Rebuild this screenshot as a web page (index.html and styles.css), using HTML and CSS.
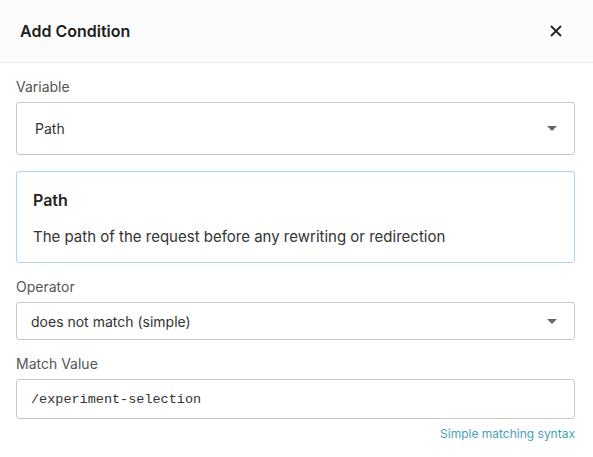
FILE: index.html
```html
<!DOCTYPE html>
<html>
<head>
<meta charset="utf-8">
<link rel="stylesheet" href="styles.css">
</head>
<body>
<div class="dialog">
  <div class="header">
    <div class="title">Add Condition</div>
    <svg class="close" width="12" height="12" viewBox="0 0 12 12"><path d="M1 1L11 11M11 1L1 11" stroke="#222" stroke-width="1.8" fill="none"/></svg>
  </div>
  <div class="content">
    <div class="label">Variable</div>
    <div class="select select-lg">
      <span>Path</span>
      <span class="caret"></span>
    </div>
    <div class="card">
      <div class="card-title">Path</div>
      <div class="card-desc">The path of the request before any rewriting or redirection</div>
    </div>
    <div class="label">Operator</div>
    <div class="select select-sm">
      <span>does not match (simple)</span>
      <span class="caret"></span>
    </div>
    <div class="label">Match Value</div>
    <div class="input">/experiment-selection</div>
    <div class="hint"><span class="link">Simple matching syntax</span></div>
  </div>
</div>
</body>
</html>
```
FILE: styles.css
```css
html, body {
  margin: 0;
  padding: 0;
  background: #ffffff;
}
body {
  font-family: Inter, "Noto Sans", Arial, sans-serif;
  color: #333;
}
.dialog {
  width: 593px;
  height: 457px;
  overflow: hidden;
}
.header {
  height: 63px;
  box-sizing: border-box;
  display: flex;
  align-items: center;
  justify-content: space-between;
  padding: 0 31px 0 20px;
  background: #fcfcfc;
  border-bottom: 1px solid #ebebeb;
}
.title {
  font-size: 16px;
  font-weight: 600;
  color: #1e1e1e;
}
.close {
  display: block;
}
.content {
  padding: 14px 18px 0 16px;
  display: flex;
  flex-direction: column;
}
.label {
  font-size: 14px;
  line-height: 20px;
  color: #555;
  margin-bottom: 5px;
}
.select {
  box-sizing: border-box;
  border: 1px solid #c8c8c8;
  border-radius: 3px;
  display: flex;
  align-items: center;
  justify-content: space-between;
  font-size: 14px;
  color: #333;
  background: #fff;
}
.select-lg {
  height: 53px;
  padding: 0 17px 0 18px;
  margin-bottom: 16px;
}
.select-sm {
  height: 38px;
  padding: 0 17px 0 14px;
  margin-bottom: 14px;
}
.caret {
  width: 0;
  height: 0;
  border-left: 5px solid transparent;
  border-right: 5px solid transparent;
  border-top: 5px solid #666;
}
.card {
  box-sizing: border-box;
  height: 92px;
  border: 1px solid #a9d5f7;
  border-radius: 3px;
  padding: 18px 16px 0 16px;
  margin-bottom: 14px;
}
.card-title {
  font-size: 16px;
  font-weight: 600;
  line-height: 20px;
  color: #222;
}
.card-desc {
  font-size: 15px;
  line-height: 20px;
  margin-top: 17px;
  color: #333;
}
.input {
  box-sizing: border-box;
  height: 40px;
  border: 1px solid #c8c8c8;
  border-radius: 3px;
  padding: 0 14px;
  display: flex;
  align-items: center;
  font-family: "Liberation Mono", "Courier New", monospace;
  font-size: 13.5px;
  color: #333;
}
.hint {
  display: flex;
  justify-content: flex-end;
  margin-top: 7px;
  font-size: 12px;
  line-height: 16px;
}
.link {
  color: #4a9fb4;
}
```
